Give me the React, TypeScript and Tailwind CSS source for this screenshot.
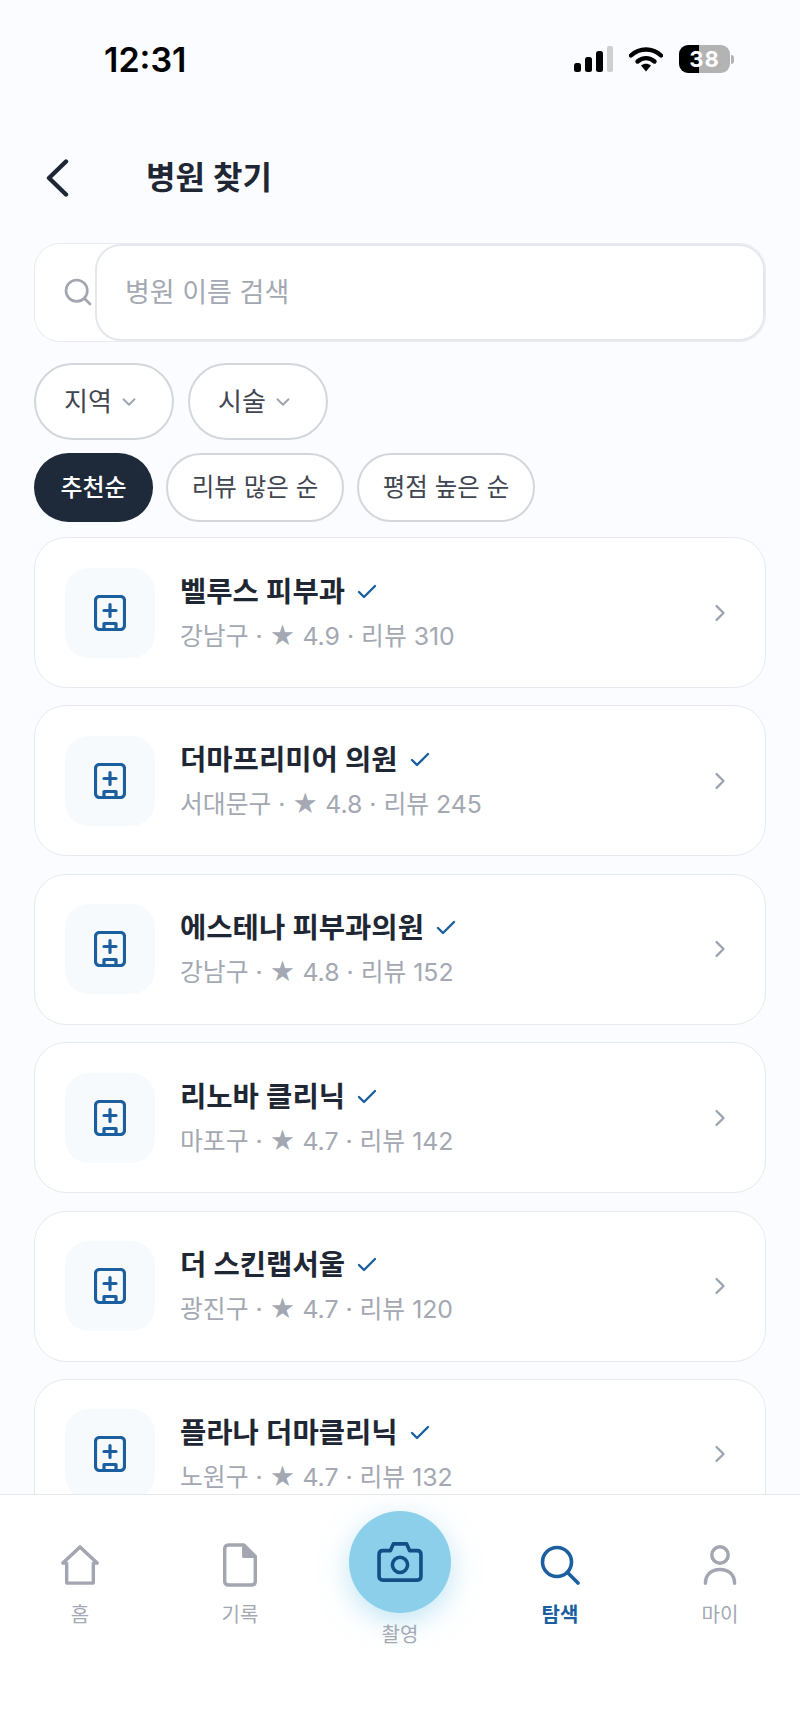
import React from "react";
import { ChevronDown, ChevronRight, Check, Search } from "lucide-react";

const hospitals = [
  { name: "벨루스 피부과", area: "강남구", rating: "4.9", reviews: 310 },
  { name: "더마프리미어 의원", area: "서대문구", rating: "4.8", reviews: 245 },
  { name: "에스테나 피부과의원", area: "강남구", rating: "4.8", reviews: 152 },
  { name: "리노바 클리닉", area: "마포구", rating: "4.7", reviews: 142 },
  { name: "더 스킨랩서울", area: "광진구", rating: "4.7", reviews: 120 },
  { name: "플라나 더마클리닉", area: "노원구", rating: "4.7", reviews: 132 },
];

const font = "font-['Inter','Noto_Sans_CJK_KR',sans-serif]";

const StatusBar = () => {
  return (
    <div className="flex h-[146px] shrink-0 items-start justify-between pl-[104px] pr-[66px] pt-[40px]">
      <span className="text-[34px] font-semibold leading-[40px] text-black">12:31</span>
      <div className="flex items-center gap-[16px] pt-[5px]">
        <svg width="39" height="26" viewBox="0 0 39 26">
          <rect x="0" y="17" width="7" height="9" rx="2.5" fill="#000" />
          <rect x="11" y="11" width="7" height="15" rx="2.5" fill="#000" />
          <rect x="22" y="5" width="7" height="21" rx="2.5" fill="#000" />
          <rect x="33" y="0" width="6" height="26" rx="2" fill="#cfcfcf" />
        </svg>
        <svg width="34" height="26" viewBox="0 0 34 26">
          <path d="M2 9.500C10.500 1.500 23.500 1.500 32 9.500" fill="none" stroke="#000" strokeWidth="4.400" strokeLinecap="round" />
          <path d="M8.500 15.500C13.500 11 20.500 11 25.500 15.500" fill="none" stroke="#000" strokeWidth="4.400" strokeLinecap="round" />
          <path d="M12 19.500C15 17 19 17 22 19.500L17 25.500Z" fill="#000" />
        </svg>
        <div className="flex items-center gap-[1px]">
          <div className="flex h-[28px] w-[51px] items-center justify-center rounded-[9px] bg-[linear-gradient(90deg,#000_0,#000_39%,#b3b3b3_39%)] text-[22px] font-bold leading-none tracking-[1px] text-white">
            38
          </div>
          <div className="h-[9px] w-[3px] rounded-r-full bg-[#b3b3b3]" />
        </div>
      </div>
    </div>
  );
};

const Chip = ({ label, active }: { label: string; active?: boolean }) => {
  return (
    <div
      className={
        active
          ? "flex h-[69px] w-[119px] items-center justify-center rounded-full bg-[#1e2a3a] text-[24px] font-medium text-white"
          : "flex h-[69px] w-[178px] items-center justify-center rounded-full border-2 border-[#d3d6db] bg-white text-[24.500px] text-[#3f4650]"
      }
    >
      {label}
    </div>
  );
};

const Dropdown = ({ label }: { label: string }) => {
  return (
    <div className="flex h-[77px] w-[140px] items-center justify-center gap-[6px] rounded-full border-2 border-[#d3d6db] bg-white pr-[4px] text-[26px] text-[#3f4650]">
      {label}
      <ChevronDown size={22} strokeWidth={2} className="text-[#9ca3af]" />
    </div>
  );
};

const HospitalIcon = () => {
  return (
    <svg width="32" height="36" viewBox="0 0 32 36" fill="none" stroke="#1c5f9f" strokeWidth="3.200" strokeLinejoin="round" strokeLinecap="round">
      <rect x="1.500" y="1.500" width="29" height="33" rx="4" />
      <path d="M16 9.500V21.500M10 15.500H22" />
      <path d="M10 34V28.500H22V34" />
    </svg>
  );
};

const HospitalCard = ({ hospital }: { hospital: (typeof hospitals)[number] }) => {
  return (
    <div className="flex h-[151px] shrink-0 items-center rounded-[32px] border border-[#e6e9ee] bg-white pl-[30px] pr-[31px]">
      <div className="flex size-[90px] shrink-0 items-center justify-center rounded-[24px] bg-[#f7fafd]">
        <HospitalIcon />
      </div>
      <div className="ml-[25px] flex flex-1 flex-col gap-[8px]">
        <div className="flex items-center gap-[10px]">
          <span className="text-[28.600px] font-semibold leading-[38px] text-[#1e2733]">{hospital.name}</span>
          <Check size={24} strokeWidth={2.400} className="text-[#1c5f9f]" />
        </div>
        <span className="text-[24.800px] leading-[34px] text-[#a3a8b2]">
          {hospital.area} · ★ {hospital.rating} · 리뷰 {hospital.reviews}
        </span>
      </div>
      <ChevronRight size={28} strokeWidth={2} className="text-[#9ca3af]" />
    </div>
  );
};

const NavItem = ({ label, active, children }: { label: string; active?: boolean; children: React.ReactNode }) => {
  return (
    <div className="flex w-[160px] flex-col items-center pt-[42px]">
      <div className="flex h-[56px] items-center">{children}</div>
      <span className={active ? "mt-[8px] text-[20px] font-semibold leading-[28px] text-[#1c5f9f]" : "mt-[8px] text-[20px] leading-[28px] text-[#a3a8b2]"}>
        {label}
      </span>
    </div>
  );
};

const BottomNav = () => {
  return (
    <div className="flex h-[240px] shrink-0 justify-center border-t border-[#e6e9ee] bg-white">
      <NavItem label="홈">
        <svg width="40" height="40" viewBox="0 0 42 42" fill="none" stroke="#a3a6b0" strokeWidth="3.600" strokeLinejoin="round">
          <path d="M3 19L21 2L39 19H35V40H7V19Z" />
        </svg>
      </NavItem>
      <NavItem label="기록">
        <svg width="36" height="44" viewBox="0 0 36 46" fill="none" stroke="#a3a6b0" strokeWidth="3.600" strokeLinejoin="round">
          <path d="M6 2H22L34 14V40C34 42.500 32.500 44 30 44H6C3.500 44 2 42.500 2 40V6C2 3.500 3.500 2 6 2Z" />
          <path d="M22 2V14H34" fill="#a3a6b0" />
        </svg>
      </NavItem>
      <div className="flex w-[160px] flex-col items-center pt-[16px]">
        <div className="flex size-[102px] items-center justify-center rounded-full bg-[#8ccfeb] shadow-[0_8px_28px_rgba(140,207,235,0.55)]">
          <svg width="46" height="40" viewBox="0 0 48 42" fill="none" stroke="#134f86" strokeWidth="3.800" strokeLinejoin="round">
            <path d="M6 9H14L17 2H31L34 9H42C44.500 9 46 10.500 46 13V36C46 38.500 44.500 40 42 40H6C3.500 40 2 38.500 2 36V13C2 10.500 3.500 9 6 9Z" />
            <circle cx="24" cy="24" r="8" />
          </svg>
        </div>
        <span className="mt-[8px] text-[20px] leading-[28px] text-[#a3a8b2]">촬영</span>
      </div>
      <NavItem label="탐색" active>
        <svg width="40" height="40" viewBox="0 0 40 40" fill="none" stroke="#1c5f9f" strokeWidth="3.600" strokeLinecap="round">
          <circle cx="17" cy="17" r="14.500" />
          <path d="M27.500 27.500L38 38" />
        </svg>
      </NavItem>
      <NavItem label="마이">
        <svg width="36" height="40" viewBox="0 0 36 44" fill="none" stroke="#a3a6b0" strokeWidth="3.800" strokeLinecap="round">
          <circle cx="18" cy="11" r="9" />
          <path d="M2 42C2 32 9 27 18 27C27 27 34 32 34 42" />
        </svg>
      </NavItem>
    </div>
  );
};

export default function App() {
  return (
    <div className={`${font} flex h-[1734px] w-[800px] flex-col overflow-hidden bg-[#fafcff]`}>
      <StatusBar />
      <div className="flex h-[64px] shrink-0 items-center pl-[45px]">
        <svg width="24" height="38" viewBox="0 0 24 38" fill="none" stroke="#1e2733" strokeWidth="4.400" strokeLinecap="round" strokeLinejoin="round">
          <path d="M21 2.500L4 19L21 35.500" />
        </svg>
        <h1 className="ml-[77px] text-[32px] font-semibold text-[#1e2733]">병원 찾기</h1>
      </div>
      <div className="mx-[34px] mt-[33px] flex h-[99px] shrink-0 items-start rounded-[26px] border border-[#e9ebef] bg-white pl-[27px]">
        <Search size={32} strokeWidth={2} className="mr-[1px] mt-[32px] shrink-0 text-[#a3a6b0]" />
        <div className="flex h-[97px] flex-1 items-center rounded-[26px] border-2 border-[#e4e7ec] bg-white pb-[0px] pl-[28px] pt-[2px] text-[27px] text-[#a3a8b2]">
          병원 이름 검색
        </div>
      </div>
      <div className="ml-[34px] mt-[21px] flex shrink-0 gap-[14px]">
        <Dropdown label="지역" />
        <Dropdown label="시술" />
      </div>
      <div className="ml-[34px] mt-[13px] flex shrink-0 gap-[13px]">
        <Chip label="추천순" active />
        <Chip label="리뷰 많은 순" />
        <Chip label="평점 높은 순" />
      </div>
      <div className="mx-[34px] mt-[15px] flex min-h-0 flex-1 flex-col gap-[17.400px] overflow-hidden">
        {hospitals.map((hospital) => (
          <HospitalCard key={hospital.name} hospital={hospital} />
        ))}
      </div>
      <BottomNav />
    </div>
  );
}
